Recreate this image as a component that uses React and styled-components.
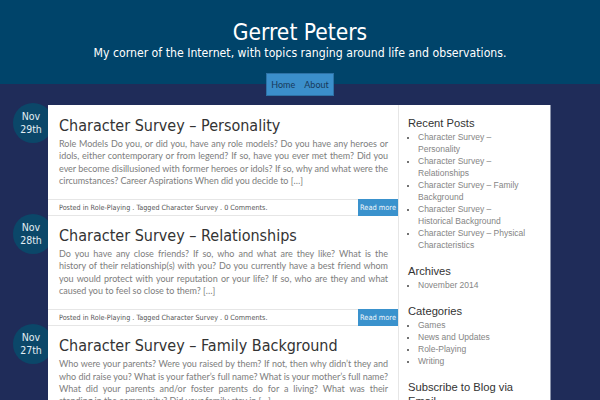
import React from "react";
import styled, { createGlobalStyle } from "styled-components";

const GlobalStyle = createGlobalStyle`
  body {
    margin: 0;
    background: #1f2c59;
    font-family: "DejaVu Sans", sans-serif;
  }
`;

const Header = styled.header`
  background: #00446a;
  height: 84px;
  box-sizing: border-box;
  padding-top: 20px;
  text-align: center;
  color: #fff;
`;

const SiteTitle = styled.h1`
  margin: 0;
  font-family: "DejaVu Sans Condensed", "DejaVu Sans", sans-serif;
  font-weight: normal;
  font-size: 22.6px;
  line-height: 24px;
`;

const Tagline = styled.p`
  margin: 0;
  font-family: "DejaVu Sans Condensed", "DejaVu Sans", sans-serif;
  font-size: 12.2px;
  line-height: 18px;
`;

const Nav = styled.nav`
  display: inline-flex;
  gap: 9px;
  margin-top: 11px;
  height: 23px;
  box-sizing: border-box;
  padding: 0 4px;
  align-items: center;
  background: #3b8fcb;
  border: 1px solid #2d72a6;
  font-family: "Lato", sans-serif;
  font-size: 9px;
  color: #17395a;
`;

const Wrap = styled.div`
  display: flex;
  margin: 21px 0 0 48px;
  width: 502px;
  background: #fff;
  box-shadow: 1px 0 0 #8a93ab;
`;

const Posts = styled.main`
  width: 350px;
`;

const Article = styled.article`
  position: relative;
  padding-top: 11px;
  & + & {
    padding-top: 10px;
  }
`;

const DateBadge = styled.div`
  position: absolute;
  left: -35px;
  top: -2px;
  width: 40px;
  height: 40px;
  border-radius: 50%;
  background: #0b4769;
  z-index: -1;
  display: flex;
  flex-direction: column;
  justify-content: center;
  align-items: center;
  padding-right: 4px;
  box-sizing: border-box;
  color: #e4eef4;
  font-family: "DejaVu Sans Condensed", "DejaVu Sans", sans-serif;
  font-size: 10.5px;
  line-height: 13px;
`;

const PostTitle = styled.h2`
  margin: 0 10px 0 11px;
  font-family: "DejaVu Sans Condensed", "DejaVu Sans", sans-serif;
  font-weight: normal;
  font-size: 16px;
  line-height: 20px;
  color: #333;
`;

const Excerpt = styled.p`
  margin: 2px 10px 12px 11px;
  font-family: "Lato", sans-serif;
  font-size: 9px;
  letter-spacing: -0.025px;
  line-height: 12.3px;
  color: #7d7d7d;
  text-align: justify;
`;

const PostFooter = styled.footer`
  display: flex;
  align-items: center;
  height: 15px;
  border-top: 1px solid #e6e6e6;
  border-bottom: 1px solid #e6e6e6;
  padding-left: 11px;
  font-family: "DejaVu Sans Condensed", "DejaVu Sans", sans-serif;
  font-size: 7.2px;
  color: #555;
`;

const Meta = styled.span`
  flex: 1;
  white-space: nowrap;
`;

const ReadMore = styled.span`
  align-self: stretch;
  display: flex;
  align-items: center;
  justify-content: center;
  margin: -1px 0;
  width: 40px;
  white-space: nowrap;
  background: #3a92cd;
  color: #f2f7fb;
  font-size: 7.4px;
`;

const Sidebar = styled.aside`
  width: 151px;
  box-sizing: border-box;
  border-left: 1px solid #e6e6e6;
  padding: 11px 21px 0 9px;
  font-family: "Liberation Sans", Arial, sans-serif;
`;

const Widget = styled.section`
  margin-bottom: 13px;
`;

const WidgetTitle = styled.h3`
  margin: 0 0 1px;
  font-weight: normal;
  font-size: 11.2px;
  line-height: 14px;
  color: #333;
`;

const List = styled.ul`
  margin: 0;
  padding-left: 10px;
  font-size: 8.5px;
  line-height: 12px;
  color: #858585;
  li::marker {
    color: #444;
    font-size: 7px;
  }
`;

const posts = [
  {
    month: "Nov",
    day: "29th",
    title: "Character Survey – Personality",
    text: "Role Models Do you, or did you, have any role models? Do you have any heroes or idols, either contemporary or from legend? If so, have you ever met them? Did you ever become disillusioned with former heroes or idols? If so, why and what were the circumstances? Career Aspirations When did you decide to […]",
  },
  {
    month: "Nov",
    day: "28th",
    title: "Character Survey – Relationships",
    text: "Do you have any close friends? If so, who and what are they like? What is the history of their relationship(s) with you? Do you currently have a best friend whom you would protect with your reputation or your life? If so, who are they and what caused you to feel so close to them? […]",
  },
  {
    month: "Nov",
    day: "27th",
    title: "Character Survey – Family Background",
    text: "Who were your parents? Were you raised by them? If not, then why didn’t they and who did raise you? What is your father’s full name? What is your mother’s full name? What did your parents and/or foster parents do for a living? What was their standing in the community? Did your family stay in […]",
  },
];

const widgets = [
  {
    title: "Recent Posts",
    items: [
      "Character Survey – Personality",
      "Character Survey – Relationships",
      "Character Survey – Family Background",
      "Character Survey – Historical Background",
      "Character Survey – Physical Characteristics",
    ],
  },
  { title: "Archives", items: ["November 2014"] },
  { title: "Categories", items: ["Games", "News and Updates", "Role-Playing", "Writing"] },
  { title: "Subscribe to Blog via Email", items: [] },
];

export default function App() {
  return (
    <>
      <GlobalStyle />
      <Header>
        <SiteTitle>Gerret Peters</SiteTitle>
        <Tagline>My corner of the Internet, with topics ranging around life and observations.</Tagline>
        <Nav>
          <span>Home</span>
          <span>About</span>
        </Nav>
      </Header>
      <Wrap>
        <Posts>
          {posts.map((p) => (
            <Article key={p.day}>
              <DateBadge>
                <span>{p.month}</span>
                <span>{p.day}</span>
              </DateBadge>
              <PostTitle>{p.title}</PostTitle>
              <Excerpt>{p.text}</Excerpt>
              <PostFooter>
                <Meta>Posted in Role-Playing . Tagged Character Survey . 0 Comments.</Meta>
                <ReadMore>Read more</ReadMore>
              </PostFooter>
            </Article>
          ))}
        </Posts>
        <Sidebar>
          {widgets.map((w) => (
            <Widget key={w.title}>
              <WidgetTitle>{w.title}</WidgetTitle>
              {w.items.length > 0 && (
                <List>
                  {w.items.map((i) => (
                    <li key={i}>{i}</li>
                  ))}
                </List>
              )}
            </Widget>
          ))}
        </Sidebar>
      </Wrap>
    </>
  );
}
